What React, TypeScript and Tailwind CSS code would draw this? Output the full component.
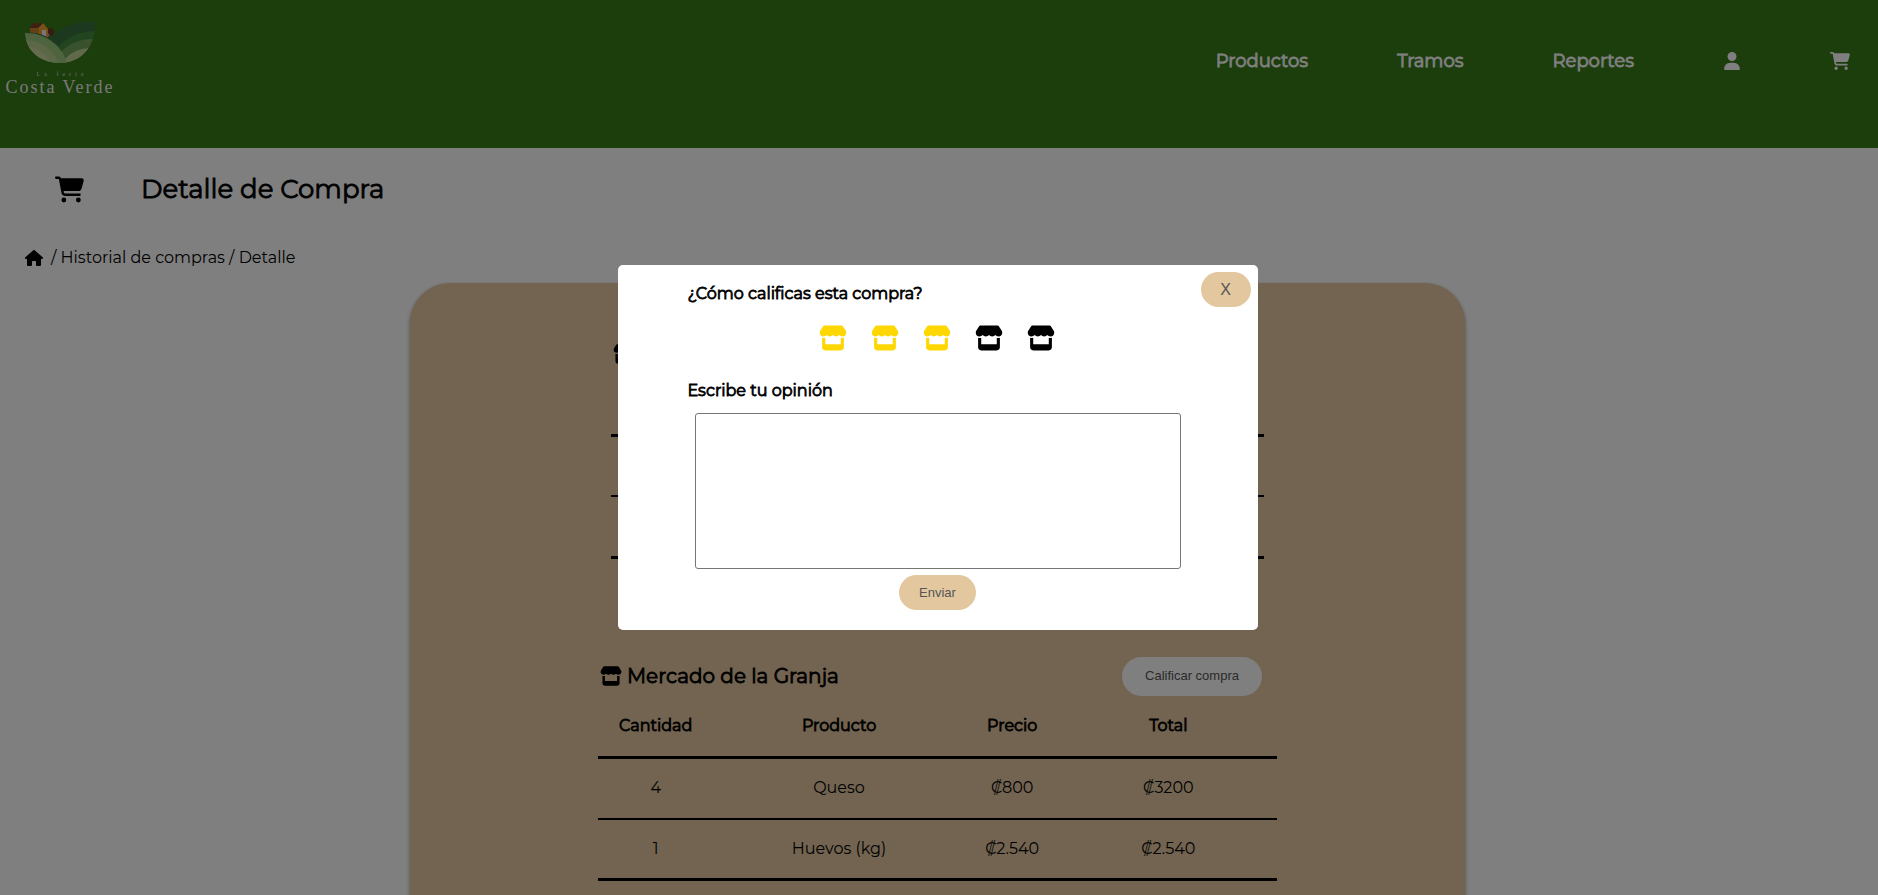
import { useState } from "react";
import { FaCartShopping, FaHouse, FaStore, FaUser } from "react-icons/fa6";

type Row = { cantidad: string; producto: string; precio: string; total: string };
type Shop = { name: string; width: string; rows: Row[] };

const shops: Shop[] = [
  {
    name: "El Valle",
    width: "w-[653px]",
    rows: [
      { cantidad: "2", producto: "Tomate (kg)", precio: "₡1.200", total: "₡2.400" },
      { cantidad: "1", producto: "Papa (kg)", precio: "₡1.100", total: "₡1.100" },
    ],
  },
  {
    name: "Mercado de la Granja",
    width: "w-[679px]",
    rows: [
      { cantidad: "4", producto: "Queso", precio: "₡800", total: "₡3200" },
      { cantidad: "1", producto: "Huevos (kg)", precio: "₡2.540", total: "₡2.540" },
    ],
  },
];

function Logo() {
  return (
    <svg viewBox="0 0 120 110" className="h-[110px] w-[120px]" role="img" aria-label="La feria Costa Verde">
      <defs>
        <clipPath id="bowl">
          <path d="M25 33C26 52 42 63 60 63C80 63 96 48 95 22C76 20 60 27 50 39C42 33 33 32 25 33Z" />
        </clipPath>
      </defs>
      <circle cx="50" cy="32" r="4" fill="#6b3a28" />
      <path d="M30 27H39V38H30Z" fill="#c98228" />
      <path d="M39 27L43 23L48 29V38H39Z" fill="#f0a030" />
      <path d="M29 28L34 23H43L38 28Z" fill="#7c4228" />
      <path d="M42 30h4v7h-4z" fill="#f2efef" />
      <circle cx="48" cy="35" r="1.5" fill="#d890a8" />
      <g clipPath="url(#bowl)">
        <rect x="20" y="15" width="80" height="55" fill="#38703e" />
        <circle cx="95" cy="83" r="52" fill="#44883f" />
        <circle cx="92" cy="83" r="44" fill="#75a35c" />
        <circle cx="90" cy="82" r="34" fill="#c0d295" />
        <circle cx="27" cy="75" r="42" fill="#9cc87c" />
        <circle cx="25" cy="76" r="36" fill="#b8cf90" />
        <circle cx="23" cy="77" r="31" fill="#ccd6a0" />
        <circle cx="22" cy="78" r="26" fill="#dce0b0" />
      </g>
      <text x="62" y="76" textAnchor="middle" fontFamily="Liberation Serif, serif" fontSize="6" letterSpacing="4" fill="#d4dcd0">La feria</text>
      <text x="60" y="93" textAnchor="middle" fontFamily="Liberation Serif, serif" fontSize="18" letterSpacing="2" fill="#f0f0f0">Costa Verde</text>
    </svg>
  );
}

function ShopSection({ shop }: { shop: Shop }) {
  return (
    <section className={`mx-auto ${shop.width}`}>
      <div className="flex items-center justify-between pr-[15px]">
        <h2 className="flex items-center gap-[5px] text-xl [-webkit-text-stroke:0.8px_black]">
          <FaStore className="ml-0.5 size-[22px]" />
          {shop.name}
        </h2>
        <button type="button" className="h-[39px] w-[140px] rounded-full bg-white font-['Liberation_Sans',sans-serif] text-[13px] text-[#555]">
          Calificar compra
        </button>
      </div>
      <table className="w-full table-fixed border-collapse text-center text-base">
        <thead>
          <tr className="h-[62px] border-b-[3px] border-black [-webkit-text-stroke:0.8px_black]">
            <th className="w-[17%] font-normal">Cantidad</th>
            <th className="w-[37%] font-normal">Producto</th>
            <th className="w-[14%] font-normal">Precio</th>
            <th className="w-[32%] font-normal">Total</th>
          </tr>
        </thead>
        <tbody>
          {shop.rows.map((row) => (
            <tr key={row.producto} className="h-[61px] border-b-2 border-black last:border-b-[3px]">
              <td>{row.cantidad}</td>
              <td>{row.producto}</td>
              <td>{row.precio}</td>
              <td>{row.total}</td>
            </tr>
          ))}
        </tbody>
      </table>
    </section>
  );
}

function RatingDialog({ onClose }: { onClose: () => void }) {
  const [rating, setRating] = useState(3);
  return (
    <div className="fixed inset-0 z-10 flex items-center justify-center bg-black/50 pr-[3px]">
      <div role="dialog" aria-modal="true" aria-labelledby="rating-title" className="relative flex w-[640px] flex-col rounded-[5px] bg-white px-[70px] pt-[17px] pb-5">
        <button type="button" aria-label="Cerrar" onClick={onClose} className="absolute top-[7px] right-[7px] h-[35px] w-[50px] rounded-full bg-[#e3c79f] font-['Liberation_Sans',sans-serif] text-base text-[#555]">
          X
        </button>
        <h2 id="rating-title" className="text-base [-webkit-text-stroke:0.8px_black]">¿Cómo calificas esta compra?</h2>
        <div className="mt-[18px] flex justify-center gap-6 pr-0.5">
          {[1, 2, 3, 4, 5].map((value) => (
            <button key={value} type="button" aria-label={`Calificar con ${value}`} onClick={() => setRating(value)} className={value <= rating ? "text-[#ffd700]" : "text-black"}>
              <FaStore className="size-7" />
            </button>
          ))}
        </div>
        <label htmlFor="opinion" className="mt-[27px] text-base [-webkit-text-stroke:0.8px_black]">Escribe tu opinión</label>
        <textarea id="opinion" className="mx-[7px] mt-[10px] h-[156px] resize-none rounded-[3px] border border-[#767676]" />
        <button type="button" className="mt-1.5 h-[35px] w-[77px] self-center rounded-full bg-[#e3c79f] font-['Liberation_Sans',sans-serif] text-[13px] text-[#555]">
          Enviar
        </button>
      </div>
    </div>
  );
}

export default function App() {
  const [open, setOpen] = useState(true);
  return (
    <div className="min-h-screen bg-white font-['Montserrat','Inter',sans-serif] text-black">
      <header className="flex h-[148px] items-start justify-between bg-[#397b19]">
        <Logo />
        <nav className="flex items-center gap-[89px] pt-[47px] pr-7 text-lg text-white">
          <a href="#productos" className="[-webkit-text-stroke:0.8px_white]">Productos</a>
          <a href="#tramos" className="[-webkit-text-stroke:0.8px_white]">Tramos</a>
          <a href="#reportes" className="[-webkit-text-stroke:0.8px_white]">Reportes</a>
          <a href="#perfil" aria-label="Perfil"><FaUser className="size-[18px]" /></a>
          <a href="#carrito" aria-label="Carrito"><FaCartShopping className="size-5" /></a>
        </nav>
      </header>
      <main>
        <div className="flex items-center gap-[57px] px-[55px] pt-5">
          <FaCartShopping className="size-[29px]" />
          <h1 className="text-[26px] leading-[42px] [-webkit-text-stroke:0.8px_black]">Detalle de Compra</h1>
        </div>
        <nav aria-label="Ruta" className="mt-9 flex items-center gap-2 pl-[25px] text-base">
          <a href="#inicio" aria-label="Inicio"><FaHouse className="size-[18px]" /></a>
          <span>/ <a href="#historial">Historial de compras</a> / Detalle</span>
        </nav>
        <div className="pr-[3px]">
          <div className="mx-auto mt-[13px] flex w-[1055px] max-w-full flex-col gap-[98px] rounded-[40px] bg-[#e4c8a0] pt-[51px] pb-16 shadow-[0_2px_4px_rgba(0,0,0,0.4)]">
            {shops.map((shop) => <ShopSection key={shop.name} shop={shop} />)}
          </div>
        </div>
      </main>
      {open && <RatingDialog onClose={() => setOpen(false)} />}
    </div>
  );
}
